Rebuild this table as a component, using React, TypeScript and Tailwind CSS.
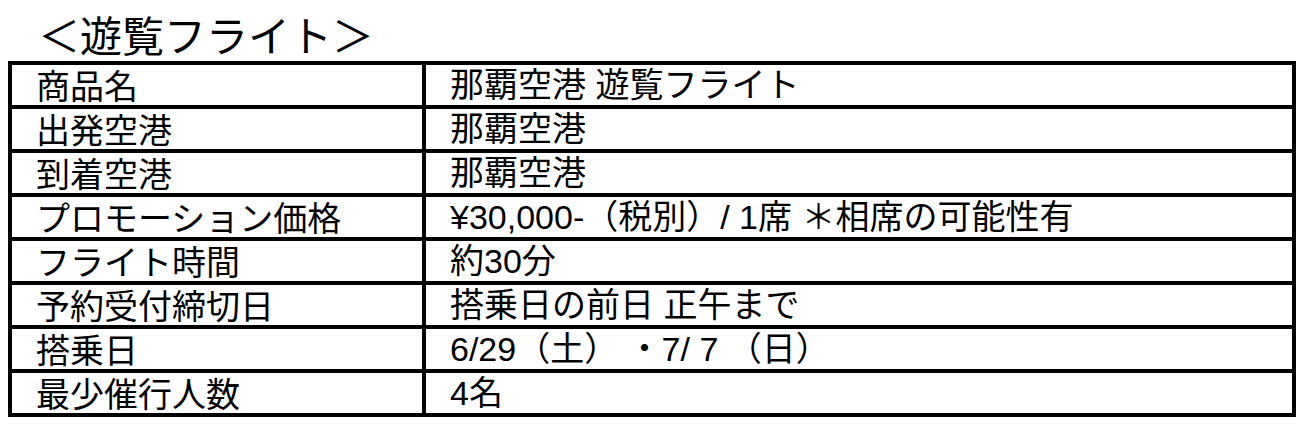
const rows: [string, string][] = [
  ["商品名", "那覇空港 遊覧フライト"],
  ["出発空港", "那覇空港"],
  ["到着空港", "那覇空港"],
  ["プロモーション価格", "¥30,000-（税別）/ 1席 ＊相席の可能性有"],
  ["フライト時間", "約30分"],
  ["予約受付締切日", "搭乗日の前日 正午まで"],
  ["搭乗日", "6/29（土） ・7/ 7 （日）"],
  ["最少催行人数", "4名"],
]

export default function App() {
  return (
    <div className="h-[442px] w-[1312px] bg-white text-black">
      <h2 className="h-[61px] pl-[38px] pt-[11px] text-[42px] leading-[46px] font-normal [font-family:'Noto_Sans_CJK_JP',sans-serif]">
        ＜遊覧フライト＞
      </h2>
      <div className="ml-2 w-[1288px] border-4 border-black">
        {rows.map(([label, value], i) => (
          <div
            key={label}
            className={`grid grid-cols-[414px_866px] ${i > 0 ? "border-t-4 border-black" : ""}`}
          >
            <div className="flex h-[40px] items-center border-r-4 border-black pl-6 text-[34px] leading-[40px] whitespace-nowrap [font-family:'Noto_Sans_CJK_JP',sans-serif]">
              {label}
            </div>
            <div className="flex h-[40px] items-center pl-6 text-[34px] leading-[40px] whitespace-nowrap [font-family:'Liberation_Sans','Noto_Sans_CJK_JP',sans-serif]">
              {value}
            </div>
          </div>
        ))}
      </div>
    </div>
  )
}
